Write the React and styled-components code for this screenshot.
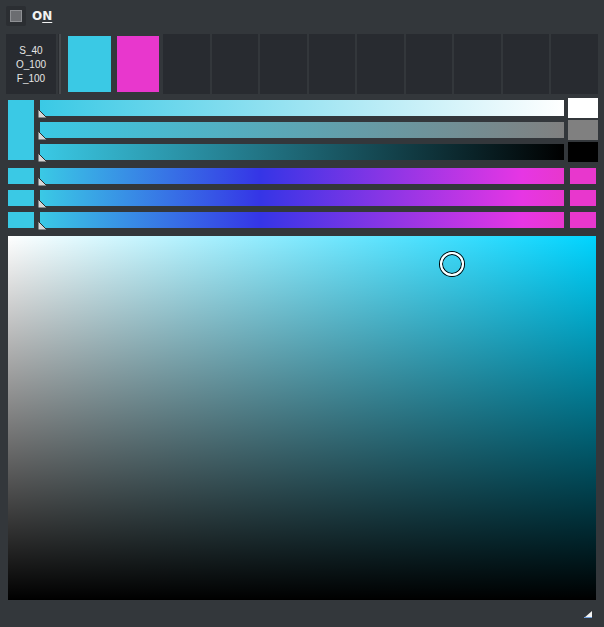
import React from 'react'
import styled, { createGlobalStyle } from 'styled-components'

const CYAN = '#3ac9e5'
const MAGENTA = '#e837cd'
const HUE_RAMP = `linear-gradient(to right, ${CYAN} 0%, #3535e6 42%, #e636e4 92%, ${MAGENTA} 100%)`

const Global = createGlobalStyle`
    html, body {
        margin: 0;
        padding: 0;
        background: #33373b;
    }
    body {
        font-family: "Liberation Sans", Arial, sans-serif;
        color: #e6e6e6;
    }
`

const Page = styled.div`
    width: 604px;
    height: 627px;
    display: flex;
    flex-direction: column;
    background: #33373b;
    overflow: hidden;
`

const Header = styled.div`
    height: 34px;
    display: flex;
    align-items: flex-start;
    gap: 6px;
    padding: 6px 0 0 6px;
    box-sizing: border-box;
`

const CheckBox = styled.div`
    width: 20px;
    height: 20px;
    background: #2b2e32;
    border-radius: 2px;
    display: flex;
    align-items: center;
    justify-content: center;
`

const CheckInner = styled.div`
    width: 10px;
    height: 10px;
    background: #6b6d71;
    border: 1px solid #8e9094;
`

const Title = styled.div`
    font-family: "DejaVu Sans", sans-serif;
    font-weight: bold;
    font-size: 12px;
    line-height: 20px;
    color: #f2f2f2;
    u {
        text-decoration-thickness: 1px;
        text-underline-offset: 2px;
    }
`

const SwatchRow = styled.div`
    height: 60px;
    display: flex;
    padding: 0 6px;
`

const Info = styled.div`
    width: 50px;
    background: #282b30;
    display: flex;
    flex-direction: column;
    align-items: center;
    justify-content: center;
    font-size: 10px;
    line-height: 14px;
    padding-top: 1px;
    box-sizing: border-box;
`

const Divider = styled.div`
    width: 3px;
    margin: 0 5px 0 2px;
    background: #45484c;
    border-left: 1px solid #2a2d31;
    box-sizing: border-box;
`

const Cells = styled.div`
    flex: 1;
    display: grid;
    grid-template-columns: repeat(11, 1fr);
    gap: 2px;
`

const Cell = styled.div`
    background: ${p => (p.$color ? 'transparent' : '#282b30')};
    display: flex;
    min-width: 0;
`

const CellColor = styled.div`
    flex: 1;
    margin: 2px;
    background: ${p => p.$color};
`

const Sliders = styled.div`
    display: flex;
    flex-direction: column;
    padding: 4px 6px 0 8px;
`

const Group = styled.div`
    display: flex;
    gap: 6px;
`

const BigSwatch = styled.div`
    width: 26px;
    margin: 2px 0;
    background: ${p => p.$color};
`

const Stack = styled.div`
    flex: 1;
    display: flex;
    flex-direction: column;
    gap: 2px;
`

const Row = styled.div`
    height: 20px;
    display: flex;
    align-items: center;
    gap: 4px;
    margin-top: ${p => p.$mt || 0}px;
`

const SmallSwatch = styled.div`
    width: 26px;
    height: 16px;
    margin-right: 2px;
    background: ${p => p.$color};
`

const Track = styled.div`
    position: relative;
    flex: 1;
    height: 16px;
    background: ${p => p.$bg};
`

const Thumb = styled.svg`
    position: absolute;
    left: -2px;
    bottom: -2px;
    width: 9px;
    height: 9px;
`

const EndCell = styled.div`
    width: 30px;
    height: 20px;
    display: flex;
    align-items: center;
    justify-content: center;
`

const EndSwatch = styled.div`
    width: ${p => (p.$small ? 26 : 30)}px;
    height: ${p => (p.$small ? 16 : 20)}px;
    background: ${p => p.$color};
`

const Canvas = styled.div`
    position: relative;
    height: 364px;
    margin: 6px 8px 0 8px;
    background:
        linear-gradient(to bottom, rgba(0, 0, 0, 0), #000),
        linear-gradient(to right, #fff, #00d4ff);
`

const Picker = styled.div`
    position: absolute;
    left: 432px;
    top: 16px;
    width: 20px;
    height: 20px;
    border-radius: 50%;
    border: 2px solid #fff;
    box-shadow: 0 0 0 1px #000, inset 0 0 0 1px #000;
`

const Footer = styled.div`
    flex: 1;
    display: flex;
    justify-content: flex-end;
    align-items: flex-start;
    padding: 11px 12px 0 0;
`

const SliderThumb = () => (
    <Thumb viewBox="0 0 9 9">
        <polygon points="0.5,0.5 0.5,8.5 8.5,8.5" fill="#d6d6d6" />
        <line x1="0.5" y1="0.5" x2="8.5" y2="8.5" stroke="#2a2a2a" strokeWidth="1" />
    </Thumb>
)

const Slider = ({ bg }) => (
    <Track $bg={bg}>
        <SliderThumb />
    </Track>
)

const palette = [CYAN, MAGENTA, null, null, null, null, null, null, null, null, null]

const App = () => {
    return (
        <Page>
            <Global />
            <Header>
                <CheckBox>
                    <CheckInner />
                </CheckBox>
                <Title>O<u>N</u></Title>
            </Header>

            <SwatchRow>
                <Info>
                    <div>S_40</div>
                    <div>O_100</div>
                    <div>F_100</div>
                </Info>
                <Divider />
                <Cells>
                    {palette.map((c, i) => (
                        <Cell key={i} $color={c}>
                            {c && <CellColor $color={c} />}
                        </Cell>
                    ))}
                </Cells>
            </SwatchRow>

            <Sliders>
                <Group>
                    <BigSwatch $color={CYAN} />
                    <Stack>
                        <Row>
                            <Slider bg={`linear-gradient(to right, ${CYAN}, #fff)`} />
                            <EndCell><EndSwatch $color="#fff" /></EndCell>
                        </Row>
                        <Row>
                            <Slider bg={`linear-gradient(to right, ${CYAN}, #808080)`} />
                            <EndCell><EndSwatch $color="#808080" /></EndCell>
                        </Row>
                        <Row>
                            <Slider bg={`linear-gradient(to right, ${CYAN}, #000)`} />
                            <EndCell><EndSwatch $color="#000" /></EndCell>
                        </Row>
                    </Stack>
                </Group>
                {[4, 2, 2].map((mt, i) => (
                    <Row key={i} $mt={mt}>
                        <SmallSwatch $color={CYAN} />
                        <Slider bg={HUE_RAMP} />
                        <EndCell><EndSwatch $small $color={MAGENTA} /></EndCell>
                    </Row>
                ))}
            </Sliders>

            <Canvas>
                <Picker />
            </Canvas>

            <Footer>
                <svg width="8" height="7" viewBox="0 0 8 7">
                    <polygon points="8,0 8,7 0,7" fill="#f4f4f4" />
                    <line x1="0" y1="6.5" x2="8" y2="6.5" stroke="#6fa0e0" strokeWidth="1" />
                </svg>
            </Footer>
        </Page>
    )
}

export default App
